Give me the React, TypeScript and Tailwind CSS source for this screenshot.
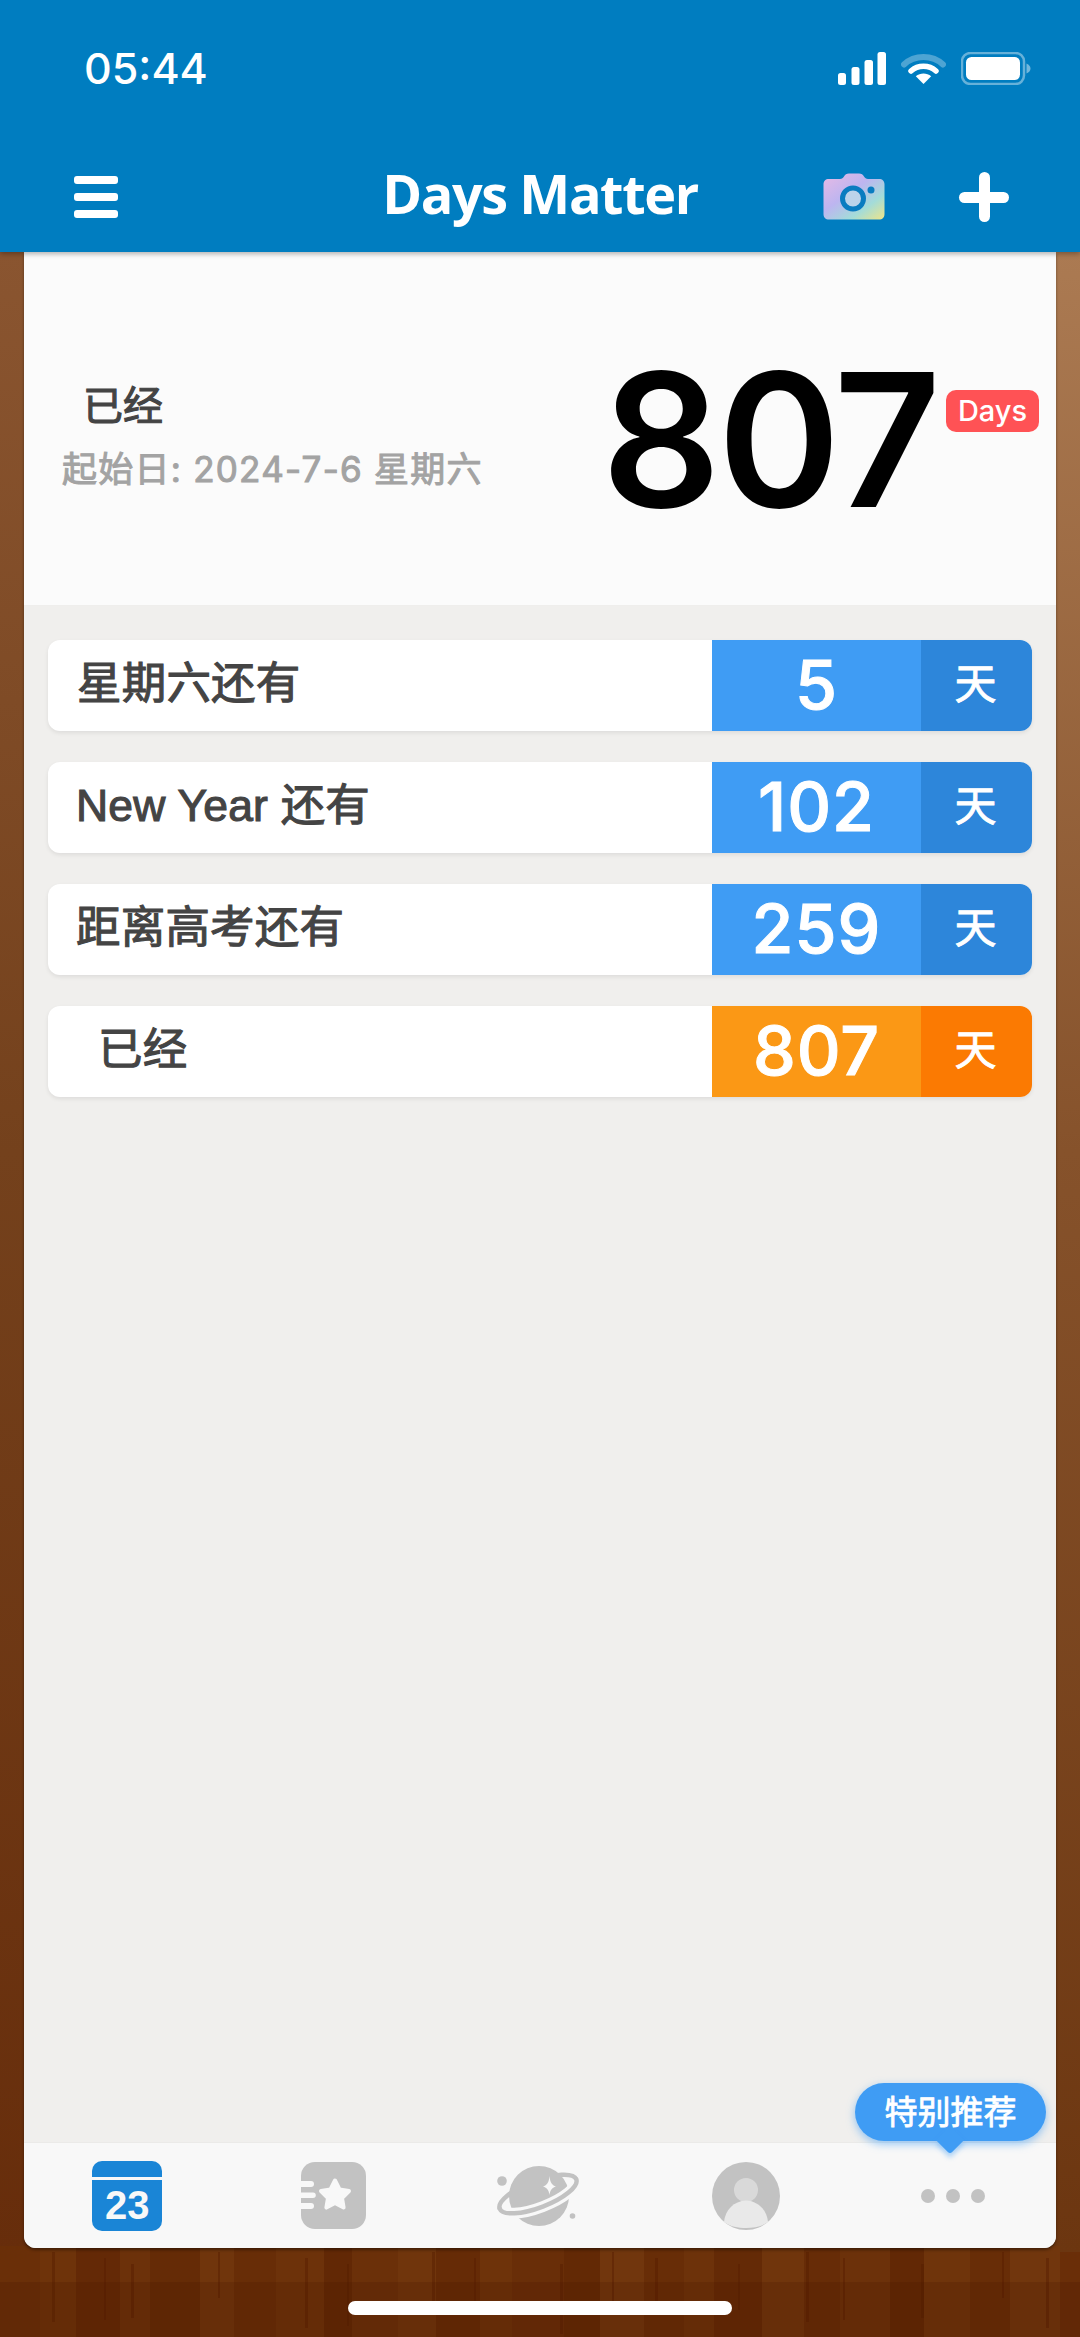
const sans = "font-['Inter','Noto_Sans_CJK_SC',sans-serif]";

// planks along the bottom of the wood background: [width, tone]
const planks: [number, string][] = [
  [40, '#6a2f08'], [36, '#6e330a'], [44, '#642906'], [30, '#6c310a'], [50, '#652b06'], [34, '#70350c'], [42, '#682d07'],
  [48, '#6d320a'], [28, '#622805'], [46, '#6b3009'], [38, '#70350c'], [44, '#662b06'], [32, '#6e330a'], [52, '#692e08'],
  [36, '#632905'], [44, '#71360d'], [40, '#682d07'], [30, '#6d320a'], [48, '#642a06'], [42, '#70350c'], [36, '#672c07'],
  [50, '#6c310a'], [34, '#622805'], [46, '#6f340b'], [40, '#682d07'], [50, '#71360d'],
];

// dark grain marks, as x positions
const grain = [52, 104, 131, 218, 305, 347, 432, 474, 560, 612, 655, 738, 806, 843, 921, 1002, 1046];

function Wood() {
  return (
    <svg className="absolute inset-0" width="1080" height="2337" viewBox="0 0 1080 2337" preserveAspectRatio="none">
      <defs>
        <linearGradient id="woodL" x1="0" y1="0" x2="0" y2="1">
          <stop offset="0" stopColor="#8a5530" />
          <stop offset="0.45" stopColor="#74411c" />
          <stop offset="1" stopColor="#672d0b" />
        </linearGradient>
        <linearGradient id="woodR" x1="0" y1="0" x2="0" y2="1">
          <stop offset="0" stopColor="#ab7a52" />
          <stop offset="0.45" stopColor="#86522b" />
          <stop offset="1" stopColor="#6c3610" />
        </linearGradient>
      </defs>
      <rect x="0" y="252" width="30" height="2000" fill="url(#woodL)" />
      <rect x="1050" y="252" width="30" height="2000" fill="url(#woodR)" />
      {planks.map(([w, c], i) => (
        <rect key={i} x={planks.slice(0, i).reduce((sum, p) => sum + p[0], 0)} y="2246" width={w} height="91" fill={c} />
      ))}
      {grain.map((x, i) => (
        <rect key={x} x={x} y={2252 + (i % 3) * 6} width={i % 2 ? 2 : 3} height={70 - (i % 4) * 8} fill="#561c01" opacity="0.45" />
      ))}
      <rect x="0" y="2282" width="1080" height="55" fill="#4a1800" opacity="0.22" />
    </svg>
  );
}

function SignalIcon() {
  return (
    <svg width="48" height="33" viewBox="0 0 48 33" fill="#fff">
      <rect x="0" y="21" width="8" height="12" rx="2.5" />
      <rect x="13.5" y="15" width="8" height="18" rx="2.5" />
      <rect x="26.5" y="8" width="8.5" height="25" rx="2.5" />
      <rect x="39.5" y="0" width="8.5" height="33" rx="2.5" />
    </svg>
  );
}

function WifiIcon() {
  return (
    <svg width="45" height="33" viewBox="0 0 45 33" fill="none">
      <path d="M3 12.5C13.5 2.5 31.5 2.5 42 12.5" stroke="#fff" strokeOpacity="0.3" strokeWidth="6" strokeLinecap="round" />
      <path d="M10 19C17 12.8 28 12.8 35 19" stroke="#fff" strokeWidth="5.5" strokeLinecap="round" />
      <path d="M22.5 32L14.8 24.2C19.3 20.5 25.7 20.5 30.2 24.2Z" fill="#fff" />
    </svg>
  );
}

function BatteryIcon() {
  return (
    <svg width="70" height="33" viewBox="0 0 70 33">
      <rect x="1" y="1" width="62" height="31" rx="8.5" fill="none" stroke="#fff" strokeOpacity="0.4" strokeWidth="2.5" />
      <rect x="5" y="5" width="54" height="23" rx="5.5" fill="#fff" />
      <path d="M65.5 11.5C68 12.5 69.5 14.5 69.5 16.5S68 20.5 65.5 21.5Z" fill="#fff" fillOpacity="0.45" />
    </svg>
  );
}

function CameraIcon() {
  return (
    <svg width="62" height="47" viewBox="0 0 62 47">
      <defs>
        <linearGradient id="cam" x1="0.05" y1="0.05" x2="0.95" y2="1">
          <stop offset="0" stopColor="#e3b9e6" />
          <stop offset="0.4" stopColor="#bdb5f0" />
          <stop offset="0.72" stopColor="#a3dcd9" />
          <stop offset="1" stopColor="#e8e48f" />
        </linearGradient>
      </defs>
      <path
        d="M6 6H17C19 6 20 5 21 3.5C22 1.5 23.5 0.5 26 0.5H36C38.5 0.5 40 1.5 41 3.5C42 5 43 6 45 6H56C59.5 6 61.5 8 61.5 11.5V41C61.5 44.5 59.5 46.5 56 46.5H6C2.5 46.5 0.5 44.5 0.5 41V11.5C0.5 8 2.5 6 6 6Z"
        fill="url(#cam)"
      />
      <circle cx="30" cy="25.5" r="10.5" fill="#bcd3ea" stroke="#0a7cc0" strokeWidth="5" />
      <circle cx="48" cy="17" r="3.5" fill="#0a7cc0" />
    </svg>
  );
}

function CalendarTab() {
  return (
    <div className="flex h-[70px] w-[70px] flex-col overflow-hidden rounded-[10px] bg-[#1a85d6]">
      <div className="box-content h-[16px] shrink-0 border-b-[3px] border-[#f8f8f8]" />
      <div className="flex flex-1 items-center justify-center font-['Liberation_Sans',sans-serif] text-[40px] font-bold leading-none text-[#f8f8f8]">
        23
      </div>
    </div>
  );
}

function StarTab() {
  return (
    <svg width="65" height="67" viewBox="0 0 65 67">
      <rect x="0" y="0" width="65" height="67" rx="14" fill="#c2c2c2" />
      <path d="M0 19H10a3 3 0 0 1 0 6H0ZM0 30.5H12a2.8 2.8 0 0 1 0 5.6H0ZM0 41H10a3 3 0 0 1 0 6H0Z" fill="#f8f8f8" />
      <path
        d="M34 18.5L38.5 27.5L48 29L41 36L42.6 45.6L34 41L25.4 45.6L27 36L20 29L29.5 27.5Z"
        fill="#f8f8f8"
        stroke="#f8f8f8"
        strokeWidth="4"
        strokeLinejoin="round"
      />
    </svg>
  );
}

function PlanetTab() {
  return (
    <svg width="120" height="100" viewBox="0 5 120 100" fill="none">
      <circle cx="22" cy="40" r="4.8" fill="#c2c2c2" />
      <circle cx="92.5" cy="75" r="2.8" fill="#c2c2c2" />
      <g transform="rotate(-21 58 53)">
        <ellipse cx="58" cy="53" rx="41" ry="13.5" stroke="#c2c2c2" strokeWidth="4.5" />
      </g>
      <circle cx="59" cy="55" r="30" fill="#c2c2c2" />
      <g transform="rotate(-21 58 53)">
        <path d="M17 53A41 13.5 0 0 0 99 53" stroke="#f8f8f8" strokeWidth="11" />
        <path d="M17 53A41 13.5 0 0 0 99 53" stroke="#c2c2c2" strokeWidth="4.5" strokeLinecap="round" />
      </g>
      <path d="M69.5 35C70.3 42 71.8 44 76 45.5C71.8 47 70.3 49 69.5 54C68.7 49 67.2 47 63 45.5C67.2 44 68.7 42 69.5 35Z" fill="#f8f8f8" />
    </svg>
  );
}

function UserTab() {
  return (
    <svg width="68" height="68" viewBox="0 0 68 68">
      <circle cx="34" cy="34" r="34" fill="#c2c2c2" />
      <circle cx="34" cy="28" r="12" fill="#d9d9d9" />
      <path d="M12 60C13 48 22 39 34 38.5C46 39 55 48 56 60C50 64.5 42 66 34 66C26 66 18 64.5 12 60Z" fill="#e9e9e9" />
    </svg>
  );
}

function CountRow({
  title,
  days,
  indent,
  light,
  dark,
}: {
  title: string;
  days: number;
  indent: string;
  light: string;
  dark: string;
}) {
  return (
    <div className="flex h-[91px] overflow-hidden rounded-[12px] bg-white shadow-[0_2px_4px_rgba(0,0,0,0.08)]">
      <div
        className={`flex flex-1 items-center pb-[3px] font-['Liberation_Sans','Noto_Sans_CJK_SC',sans-serif] text-[44.5px] tracking-[0.2px] text-[#444444] [-webkit-text-stroke:1.1px_#444444] ${indent}`}
      >
        {title}
      </div>
      <div className={`flex w-[209px] items-center justify-center pb-[4px] text-[68px] font-medium leading-none tracking-[1px] text-white [-webkit-text-stroke:1px_#ffffff] ${light}`}>
        {days}
      </div>
      <div className={`flex w-[111px] items-center justify-center pb-[4px] pr-[2px] text-[42px] text-white [-webkit-text-stroke:0.9px_#ffffff] ${dark}`}>天</div>
    </div>
  );
}

export default function App() {
  return (
    <div className={`relative flex h-[2337px] w-[1080px] flex-col overflow-hidden bg-[#6a2e08] ${sans}`}>
      <Wood />

      <header className="relative z-10 flex h-[252px] shrink-0 flex-col bg-[#007dc0] shadow-[0_2px_5px_rgba(0,0,0,0.3)]">
        <div className="flex items-center justify-between pl-[84px] pr-[49px] pt-[51px]">
          <span className="text-[43px] font-medium leading-[34px] text-white">05:44</span>
          <div className="flex items-center gap-[15px]">
            <SignalIcon />
            <WifiIcon />
            <BatteryIcon />
          </div>
        </div>
        <div className="mt-[81px] grid grid-cols-[1fr_auto_1fr] items-center">
          <div className="flex flex-col gap-[9px] pl-[74px]">
            <div className="h-[8px] w-[44px] rounded-[3px] bg-white" />
            <div className="h-[8px] w-[44px] rounded-[3px] bg-white" />
            <div className="h-[8px] w-[44px] rounded-[3px] bg-white" />
          </div>
          <h1 className="pb-[7px] font-['Open_Sans',sans-serif] text-[54px] font-bold leading-none tracking-[-1.4px] text-white">
            Days Matter
          </h1>
          <div className="flex items-center justify-end gap-[74px] pr-[71px]">
            <CameraIcon />
            <div className="relative h-[50px] w-[50px]">
              <div className="absolute left-[20px] top-0 h-[50px] w-[11px] rounded-full bg-white" />
              <div className="absolute left-0 top-[20px] h-[11px] w-[50px] rounded-full bg-white" />
            </div>
          </div>
        </div>
      </header>

      <main className="relative mx-6 flex h-[1996px] shrink-0 flex-col overflow-visible rounded-b-[12px] bg-[#f0efed] shadow-[0_2px_3px_rgba(0,0,0,0.4)]">
        <section className="flex h-[354px] shrink-0 items-center border-b border-[#efeeec] bg-[#fbfbfb]">
          <div className="flex flex-col pl-[38px] pt-[14px]">
            <div className="pl-[21px] text-[40px] leading-[48px] text-[#444444] [-webkit-text-stroke:1.1px_#444444]">已经</div>
            <div className="mt-[19px] text-[35px] leading-[40px] tracking-[1.25px] text-[#a3a3a3] [-webkit-text-stroke:1px_#a3a3a3]">起始日: 2024-7-6 星期六</div>
          </div>
          <div className="ml-auto flex items-start pr-[17px] pt-[22px]">
            <div className="text-[186px] font-semibold leading-none tracking-[-3px] text-black">807</div>
            <div className="ml-[8px] mt-[43px] flex h-[42px] w-[93px] items-center justify-center rounded-[10px] bg-[#ff5255] text-[29px] font-medium leading-none text-white">
              Days
            </div>
          </div>
        </section>

        <section className="flex flex-1 flex-col gap-[31px] px-6 pt-[34px]">
          <CountRow title="星期六还有" days={5} indent="pl-[29px]" light="bg-[#3f9cf4]" dark="bg-[#2d86da]" />
          <CountRow title="New Year 还有" days={102} indent="pl-[28px]" light="bg-[#3f9cf4]" dark="bg-[#2d86da]" />
          <CountRow title="距离高考还有" days={259} indent="pl-[28px]" light="bg-[#3f9cf4]" dark="bg-[#2d86da]" />
          <CountRow title="已经" days={807} indent="pl-[50px]" light="bg-[#fb9815]" dark="bg-[#fb7a02]" />
        </section>

        <nav className="grid h-[106px] shrink-0 grid-cols-5 place-items-center rounded-b-[12px] border-t border-[#ebeae8] bg-[#f8f8f8]">
          <CalendarTab />
          <StarTab />
          <PlanetTab />
          <UserTab />
          <div className="flex gap-[11px]">
            <div className="h-[14px] w-[14px] rounded-full bg-[#c2c2c2]" />
            <div className="h-[14px] w-[14px] rounded-full bg-[#c2c2c2]" />
            <div className="h-[14px] w-[14px] rounded-full bg-[#c2c2c2]" />
          </div>
        </nav>

        {/* recommendation bubble over the "more" tab */}
        <div className="absolute bottom-[107px] right-[10px] flex h-[58px] w-[191px] items-center justify-center rounded-[29px] bg-[#3f9cf4] text-[33px] leading-none text-white shadow-[0_3px_8px_rgba(63,156,244,0.55)] [-webkit-text-stroke:0.8px_#ffffff]">
          特别推荐
          <div className="absolute bottom-[-9px] left-[85px] h-[20px] w-[20px] rotate-45 rounded-br-[3px] bg-[#3f9cf4] shadow-[3px_3px_5px_rgba(63,156,244,0.4)]" />
        </div>
      </main>

      <div className="relative z-10 flex flex-1 justify-center pt-[53px]">
        <div className="h-[14px] w-[384px] rounded-[7px] bg-white" />
      </div>
    </div>
  );
}
